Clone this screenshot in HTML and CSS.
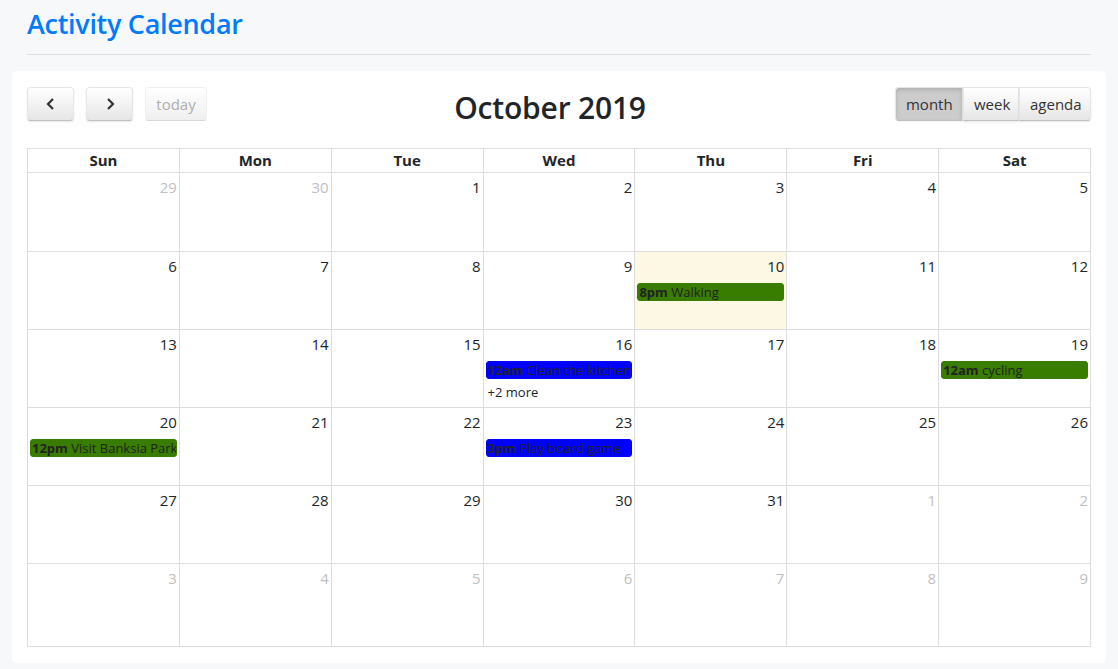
FILE: index.html
```html
<!DOCTYPE html>
<html>
<head>
<meta charset="utf-8">
<link rel="stylesheet" href="styles.css">
</head>
<body>
<div class="page">
  <h3 class="title">Activity Calendar</h3>
  <hr class="rule">
  <div class="card">
    <div class="toolbar">
      <div class="left">
        <button class="btn icon"><svg width="14" height="14" viewBox="0 0 14 14"><path d="M9 2 L4 7 L9 12" fill="none" stroke="#333" stroke-width="2.2"/></svg></button>
        <button class="btn icon"><svg width="14" height="14" viewBox="0 0 14 14"><path d="M5 2 L10 7 L5 12" fill="none" stroke="#333" stroke-width="2.2"/></svg></button>
        <button class="btn today" disabled>today</button>
      </div>
      <h2 class="month-title">October 2019</h2>
      <div class="group">
        <button class="btn g active">month</button><button class="btn g">week</button><button class="btn g">agenda</button>
      </div>
    </div>
    <div class="cal">
      <div class="head">
        <div>Sun</div><div>Mon</div><div>Tue</div><div>Wed</div><div>Thu</div><div>Fri</div><div>Sat</div>
      </div>
      <div class="week first">
        <div class="day other"><span class="num">29</span></div>
        <div class="day other"><span class="num">30</span></div>
        <div class="day"><span class="num">1</span></div>
        <div class="day"><span class="num">2</span></div>
        <div class="day"><span class="num">3</span></div>
        <div class="day"><span class="num">4</span></div>
        <div class="day"><span class="num">5</span></div>
      </div>
      <div class="week">
        <div class="day"><span class="num">6</span></div>
        <div class="day"><span class="num">7</span></div>
        <div class="day"><span class="num">8</span></div>
        <div class="day"><span class="num">9</span></div>
        <div class="day today-cell"><span class="num">10</span><div class="ev green"><b>8pm</b> Walking</div></div>
        <div class="day"><span class="num">11</span></div>
        <div class="day"><span class="num">12</span></div>
      </div>
      <div class="week">
        <div class="day"><span class="num">13</span></div>
        <div class="day"><span class="num">14</span></div>
        <div class="day"><span class="num">15</span></div>
        <div class="day"><span class="num">16</span><div class="ev blue"><b>12am</b> Clean the kitchen</div><div class="more">+2 more</div></div>
        <div class="day"><span class="num">17</span></div>
        <div class="day"><span class="num">18</span></div>
        <div class="day"><span class="num">19</span><div class="ev green"><b>12am</b> cycling</div></div>
      </div>
      <div class="week">
        <div class="day"><span class="num">20</span><div class="ev green"><b>12pm</b> Visit Banksia Park</div></div>
        <div class="day"><span class="num">21</span></div>
        <div class="day"><span class="num">22</span></div>
        <div class="day"><span class="num">23</span><div class="ev blue"><b>3pm</b> Play board game</div></div>
        <div class="day"><span class="num">24</span></div>
        <div class="day"><span class="num">25</span></div>
        <div class="day"><span class="num">26</span></div>
      </div>
      <div class="week">
        <div class="day"><span class="num">27</span></div>
        <div class="day"><span class="num">28</span></div>
        <div class="day"><span class="num">29</span></div>
        <div class="day"><span class="num">30</span></div>
        <div class="day"><span class="num">31</span></div>
        <div class="day other"><span class="num">1</span></div>
        <div class="day other"><span class="num">2</span></div>
      </div>
      <div class="week last">
        <div class="day other"><span class="num">3</span></div>
        <div class="day other"><span class="num">4</span></div>
        <div class="day other"><span class="num">5</span></div>
        <div class="day other"><span class="num">6</span></div>
        <div class="day other"><span class="num">7</span></div>
        <div class="day other"><span class="num">8</span></div>
        <div class="day other"><span class="num">9</span></div>
      </div>
    </div>
  </div>
</div>
</body>
</html>
```

FILE: styles.css
```css
* { box-sizing: border-box; }
html, body { margin: 0; padding: 0; }
body {
  background: #f7f8fa;
  font-family: "Open Sans", "Noto Sans", sans-serif;
  color: #212529;
  font-size: 16px;
}
.page { padding: 0 12px; }
.title {
  margin: 0;
  padding: 5px 15px 0;
  font-size: 27px;
  font-weight: 600;
  color: #007bff;
  line-height: 38px;
  letter-spacing: -0.3px;
}
.rule {
  margin: 11px 15px 16px;
  border: 0;
  border-top: 1px solid #dcdde0;
}
.card {
  background: #fff;
  border-radius: 5px;
  padding: 16px 15px 16px;
  width: 1094px;
}
.toolbar {
  display: flex;
  align-items: center;
  justify-content: space-between;
  height: 34px;
  margin-bottom: 27px;
}
.left { display: flex; gap: 12px; width: 240px; }
.btn {
  height: 34px;
  font-family: inherit;
  font-size: 15px;
  color: #333;
  background-color: #f5f5f5;
  background-image: linear-gradient(to bottom, #fff, #e6e6e6);
  border: 1px solid;
  border-color: #e6e6e6 #e6e6e6 #bfbfbf;
  border-radius: 4px;
  box-shadow: inset 0 1px 0 rgba(255,255,255,.2), 0 1px 2px rgba(0,0,0,.1);
  padding: 0 10px;
  margin: 0;
}
.btn.icon { width: 47px; display: flex; align-items: center; justify-content: center; }
.btn.today { width: 62px; opacity: .6; box-shadow: none; color: #777; }
.month-title {
  margin: 7px 28px 0 0;
  font-size: 30px;
  font-weight: 600;
  letter-spacing: -0.2px;
  color: #212529;
  line-height: 36px;
}
.group { display: flex; width: 230px; justify-content: flex-end; }
.btn.g { border-radius: 0; }
.btn.g:first-child { border-radius: 4px 0 0 4px; width: 68px; }
.btn.g:nth-child(2) { width: 56px; }
.btn.g:last-child { border-radius: 0 4px 4px 0; width: 72px; }
.btn.active {
  background-color: #ccc;
  background-image: none;
  box-shadow: inset 0 2px 4px rgba(0,0,0,.15), 0 1px 2px rgba(0,0,0,.05);
}
.cal {
  width: 1064px;
  border-top: 1px solid #ddd;
  border-left: 1px solid #ddd;
}
.head, .week {
  display: grid;
  grid-template-columns: repeat(7, 1fr);
}
.head div {
  border-right: 1px solid #ddd;
  border-bottom: 1px solid #ddd;
  height: 24px;
  text-align: center;
  font-weight: 700;
  font-size: 15px;
  line-height: 23px;
}
.day {
  border-right: 1px solid #ddd;
  border-bottom: 1px solid #ddd;
  height: 78px;
  display: flex;
  flex-direction: column;
  align-items: stretch;
  padding-top: 4px;
  overflow: hidden;
}
.week.first .day { height: 79px; }
.week.last .day { height: 83px; }
.num {
  align-self: flex-end;
  padding-right: 2px;
  font-size: 15px;
  line-height: 20px;
}
.other .num { color: #c0c0c0; }
.today-cell { background: #fcf8e3; }
.ev {
  margin: 7px 2px 0 2px;
  height: 18px;
  border-radius: 3px;
  font-size: 13px;
  line-height: 18px;
  padding: 0 1px;
  white-space: nowrap;
  overflow: hidden;
  color: #222;
}
.ev b { font-weight: 700; }
.green { background: #387c00; border: 1px solid #387c00; line-height: 16px; }
.blue { background: #0000ff; border: 1px solid #0000ff; line-height: 16px; }
.more {
  font-size: 13px;
  line-height: 18px;
  margin: 4px 0 0 4px;
  color: #212529;
}
```
